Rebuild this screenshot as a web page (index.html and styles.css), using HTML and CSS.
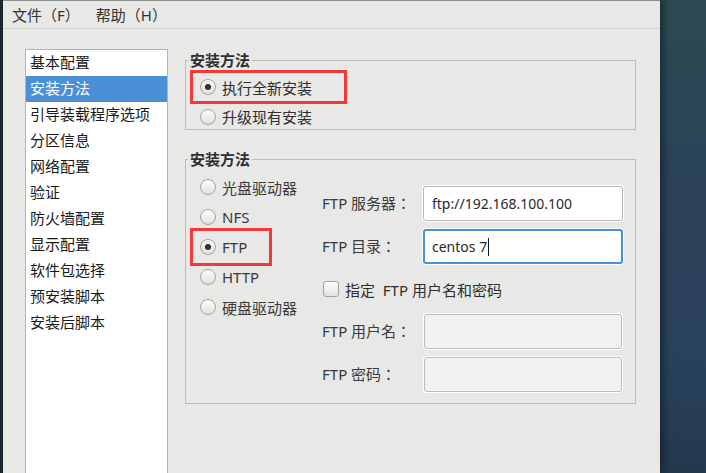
FILE: index.html
```html
<!DOCTYPE html>
<html lang="zh-CN">
<head>
<meta charset="utf-8">
<title>Kickstart 配置</title>
<link rel="stylesheet" href="styles.css">
</head>
<body>
<div class="screen">
  <div class="desk-left"></div>
  <div class="window">
    <div class="menubar">
      <span class="menu">文件（F）</span>
      <span class="menu">帮助（H）</span>
    </div>
    <div class="content">
      <ul class="nav">
        <li>基本配置</li>
        <li class="active">安装方法</li>
        <li>引导装载程序选项</li>
        <li>分区信息</li>
        <li>网络配置</li>
        <li>验证</li>
        <li>防火墙配置</li>
        <li>显示配置</li>
        <li>软件包选择</li>
        <li>预安装脚本</li>
        <li>安装后脚本</li>
      </ul>
      <div class="panels">
        <fieldset class="group group-top">
          <legend>安装方法</legend>
          <div class="radio-row hl-box"><span class="radio checked"></span>执行全新安装</div>
          <div class="radio-row row-short"><span class="radio"></span>升级现有安装</div>
        </fieldset>
        <fieldset class="group group-method">
          <legend>安装方法</legend>
          <div class="method-body">
            <div class="media-list">
              <div class="media-row"><span class="radio"></span>光盘驱动器</div>
              <div class="media-row"><span class="radio"></span>NFS</div>
              <div class="media-row hl-outline"><span class="radio checked"></span>FTP</div>
              <div class="media-row"><span class="radio"></span>HTTP</div>
              <div class="media-row"><span class="radio"></span>硬盘驱动器</div>
            </div>
            <div class="ftp-form">
              <span class="label" lang="zh-Hant">FTP 服务器：</span>
              <div class="field">ftp://192.168.100.100</div>
              <span class="label" lang="zh-Hant">FTP 目录：</span>
              <div class="field focused">centos 7<span class="caret"></span></div>
              <div class="check-row"><span class="checkbox"></span><span class="check-text">指定  FTP 用户名和密码</span></div>
              <span class="label" lang="zh-Hant">FTP 用户名：</span>
              <div class="field disabled"></div>
              <span class="label" lang="zh-Hant">FTP 密码：</span>
              <div class="field disabled"></div>
            </div>
          </div>
        </fieldset>
      </div>
    </div>
  </div>
  <div class="desk-right"></div>
</div>
</body>
</html>
```
FILE: styles.css
```css
html, body {
  margin: 0;
  padding: 0;
}

body {
  width: 706px;
  height: 473px;
  overflow: hidden;
  font-family: "Noto Sans", "Noto Sans CJK SC", sans-serif;
  font-size: 15px;
  color: #333333;
}

.screen {
  display: flex;
  height: 473px;
}

.desk-left {
  flex: none;
  width: 3px;
  background: #1c2731;
}

.window {
  flex: none;
  width: 657px;
  box-sizing: border-box;
  border-top: 1px solid #8e908b;
  background: #e8e8e7;
  display: flex;
  flex-direction: column;
  box-shadow: 3px 0 8px rgba(0, 0, 0, 0.45);
  z-index: 1;
}

.desk-right {
  flex: 1;
  background: linear-gradient(180deg, #2d4a52 0%, #2b4358 35%, #2c425c 60%, #28405a 80%, #24394c 100%);
}

/* menu bar */
.menubar {
  height: 27px;
  border-bottom: 1px solid #d3d3d1;
  display: flex;
  align-items: center;
  padding-left: 9px;
  line-height: 20px;
}

.menu + .menu {
  margin-left: 16px;
}

/* content */
.content {
  flex: 1;
  min-height: 0;
  display: flex;
  align-items: stretch;
  padding: 20px 0 0 22px;
}

.nav {
  flex: none;
  width: 143px;
  box-sizing: border-box;
  margin: 0;
  padding: 0;
  list-style: none;
  background: #ffffff;
  border: 1px solid #b4b4b2;
  border-bottom: 0;
  color: #1a1a1a;
}

.nav li {
  height: 26px;
  line-height: 25px;
  padding-left: 4px;
  white-space: nowrap;
}

.nav li.active {
  background: #4a90d9;
  color: #ffffff;
}

.panels {
  flex: none;
  width: 451px;
  margin-left: 17px;
  padding-top: 2px;
}

.group {
  margin: 0;
  padding: 1px 0 0 4px;
  min-width: 0;
  border: 1px solid #bdbdbb;
  box-sizing: border-box;
  width: 451px;
}

.group legend {
  padding: 0 2px;
  margin-left: -2px;
  font-weight: bold;
  line-height: 18px;
  font-size: 15px;
  color: #2e2e2e;
}

.group-method {
  margin-top: 20px;
  padding-top: 0;
}

/* radios */
.radio {
  flex: none;
  width: 16px;
  height: 16px;
  box-sizing: border-box;
  border-radius: 50%;
  border: 1px solid #a2a2a0;
  background: linear-gradient(180deg, #fefefe, #e0e0de);
  display: flex;
  align-items: center;
  justify-content: center;
  margin-right: 6px;
}

.radio.checked::after {
  content: "";
  width: 6px;
  height: 6px;
  border-radius: 50%;
  background: #2e3436;
}

.radio-row {
  display: flex;
  align-items: center;
  box-sizing: border-box;
  height: 34px;
  width: 157px;
  border: 3px solid transparent;
  border-right: 0;
  padding-left: 7px;
  color: #2e2e2e;
}

.radio-row.row-short {
  height: 25px;
  border-top: 0;
  border-bottom: 0;
}

.hl-box {
  border: 3px solid #f23a3a;
}

.method-body {
  display: flex;
}

.media-list {
  flex: none;
  width: 128px;
  margin-left: 4px;
  padding-top: 4px;
}

.media-row {
  display: flex;
  align-items: center;
  height: 30px;
  padding-left: 6px;
  color: #3a3a3a;
}

.hl-outline {
  width: 68px;
  outline: 3px solid #f23a3a;
  outline-offset: 1px;
}

/* ftp form */
.ftp-form {
  display: grid;
  grid-template-columns: 101px 200px;
  grid-template-rows: 35px 35px 34px 35px 35px;
  row-gap: 8px;
  padding: 18px 0 11px 0;
}

.label {
  align-self: center;
  margin-top: -2px;
  font-family: "Noto Sans", "Noto Sans CJK TC", sans-serif;
  color: #3a3a3a;
  white-space: nowrap;
}

.field {
  box-sizing: border-box;
  height: 35px;
  border: 1px solid #b6b6b4;
  border-radius: 3px;
  background: #ffffff;
  box-shadow: 0 0 0 1px #ffffff;
  padding: 0 8px;
  display: flex;
  align-items: center;
  font-size: 14px;
  color: #2a2a2a;
}

.field.focused {
  border: 2px solid #4a90d9;
  padding: 0 7px;
}

.caret {
  width: 1px;
  height: 18px;
  background: #111111;
  margin-left: 1px;
}

.field.disabled {
  margin: 0 1px;
  background: #f2f2f1;
  border-color: #bcbcba;
}

.check-row {
  grid-column: 1 / -1;
  display: flex;
  align-items: center;
}

.checkbox {
  flex: none;
  width: 16px;
  height: 16px;
  box-sizing: border-box;
  margin-left: 1px;
  border: 1px solid #a2a2a0;
  border-radius: 3px;
  background: linear-gradient(180deg, #fefefe, #e2e2e0);
}

.check-text {
  margin-left: 6px;
  white-space: pre;
  color: #2e2e2e;
}
```
